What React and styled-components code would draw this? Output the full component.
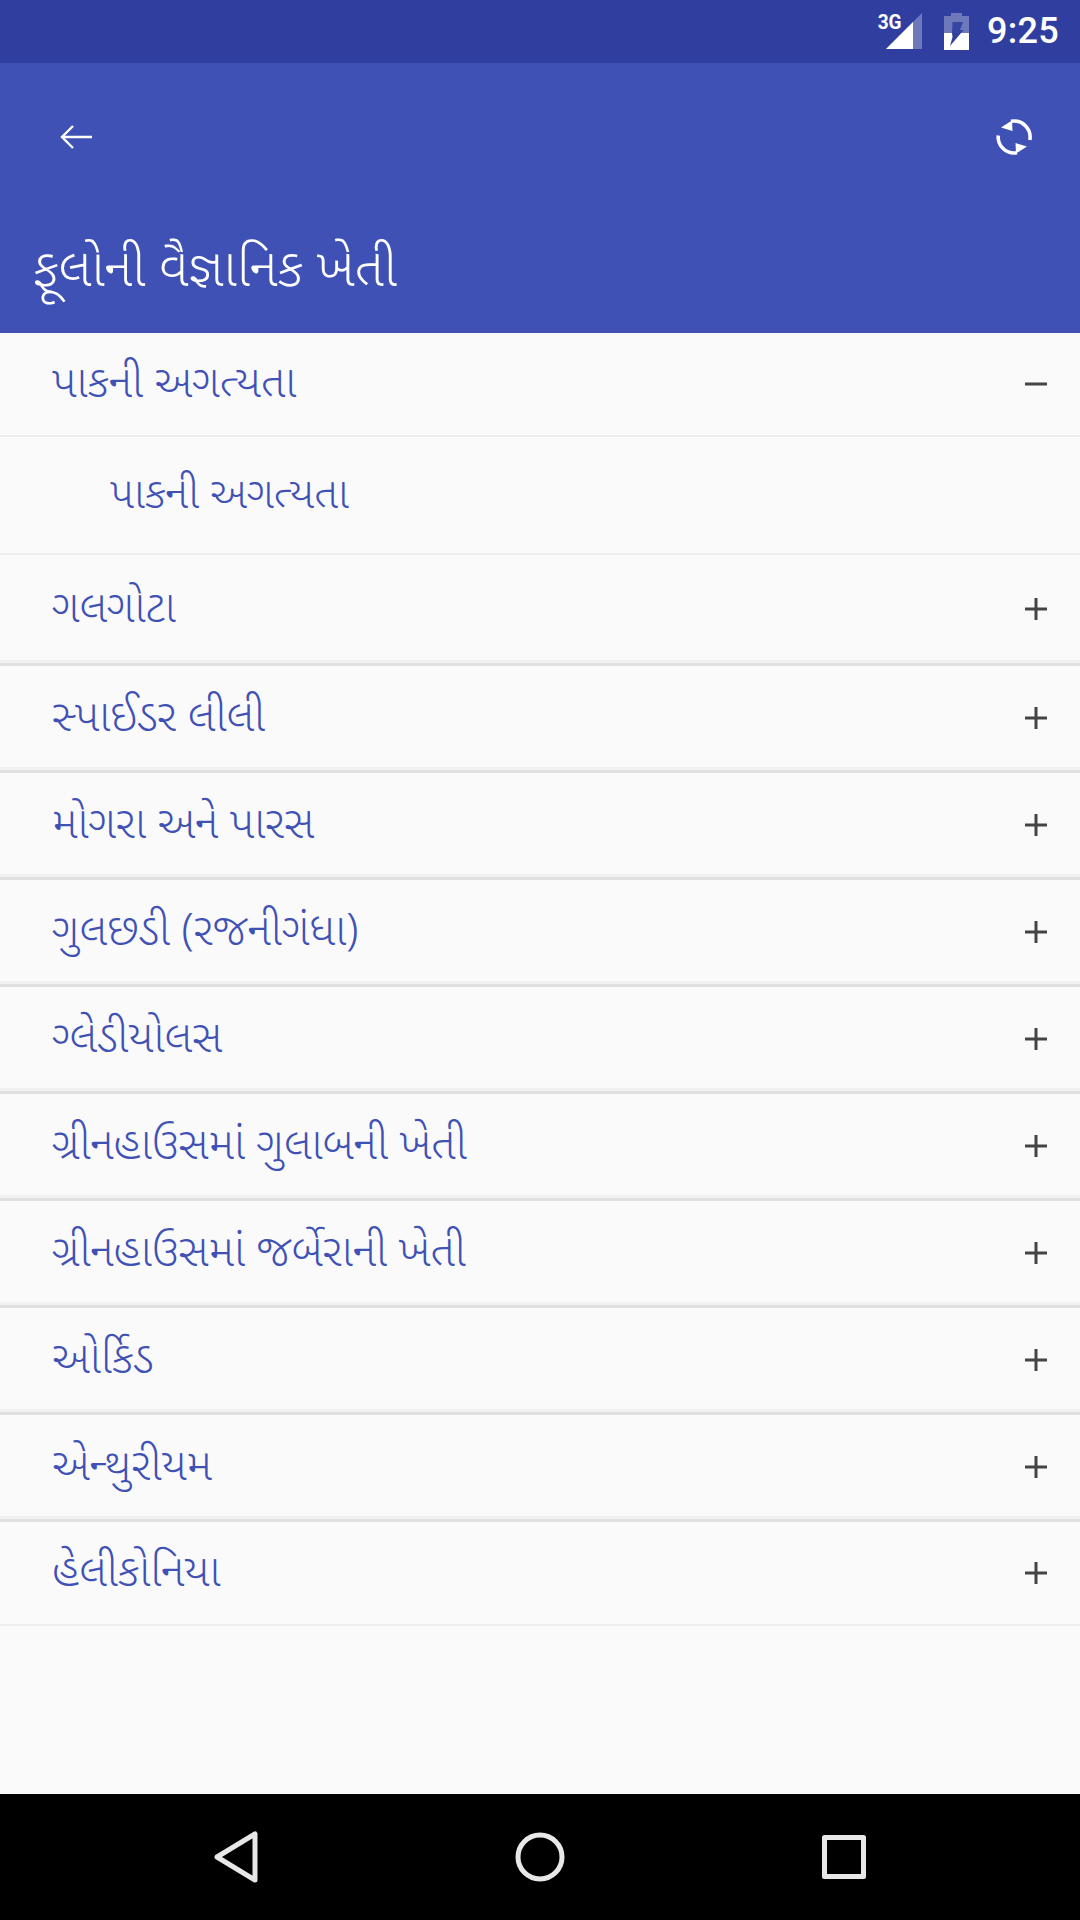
import React from "react";
import styled, { createGlobalStyle } from "styled-components";

const GlobalStyle = createGlobalStyle`
  html, body {
    margin: 0;
    padding: 0;
    background: #fafafa;
  }
  body {
    font-family: "Noto Sans Gujarati", "Noto Sans", Roboto, sans-serif;
  }
`;

const Screen = styled.div`
  width: 1080px;
  height: 1920px;
  display: flex;
  flex-direction: column;
  overflow: hidden;
  background: #fafafa;
`;

const StatusBar = styled.div`
  height: 63px;
  flex: none;
  background: #303f9f;
  display: flex;
  align-items: center;
  justify-content: flex-end;
  padding-right: 21px;
  color: #fff;
`;

const NetworkIcon = styled.div`
  position: relative;
  width: 36px;
  height: 36px;
  margin-top: -1px;
  margin-right: 22px;
`;

const NetworkLabel = styled.span`
  position: absolute;
  left: -9px;
  top: 0;
  font: bold 20px/18px Roboto, sans-serif;
  transform: scaleX(0.95);
`;

const Clock = styled.div`
  font: 500 36px/63px Roboto, sans-serif;
  margin-left: 18px;
  letter-spacing: 0.3px;
`;

const AppBar = styled.header`
  height: 270px;
  flex: none;
  background: #3f51b5;
  display: flex;
  flex-direction: column;
`;

const ActionRow = styled.div`
  height: 147px;
  display: flex;
  align-items: center;
  justify-content: space-between;
  padding: 0 46px 0 60px;
`;

const Title = styled.h1`
  margin: 33px 0 0;
  padding-left: 33px;
  font-size: 52.5px;
  line-height: 60px;
  font-weight: 300;
  color: #fff;
`;

const List = styled.div`
  flex: 1;
  display: flex;
  flex-direction: column;
`;

const Row = styled.div`
  box-sizing: border-box;
  height: ${(p) => p.$height}px;
  display: flex;
  align-items: center;
  justify-content: space-between;
  padding: 0 32px 0 ${(p) => (p.$child ? 110 : 52)}px;
  border-bottom: ${(p) => (p.$heavy ? "3px solid #e0e0e0" : "2px solid #eeeeee")};
  box-shadow: ${(p) => (p.$heavy ? "inset 0 -3px 0 #f1f1f1" : "none")};
`;

const RowLabel = styled.span`
  font-size: ${(p) => (p.$child ? 43 : 44)}px;
  font-weight: 350;
  line-height: 54px;
  padding-top: 5px;
  color: #3f51b5;
`;

const ExpanderIcon = styled.svg`
  margin-bottom: ${(p) => (p.$open ? 0 : 1)}px;
`;

const NavBar = styled.nav`
  height: 126px;
  flex: none;
  background: #000;
  display: flex;
  align-items: center;
  justify-content: center;
  gap: 257px;
`;

const BackArrow = () => (
  <svg width="32" height="24" viewBox="0 0 32 24" fill="none" stroke="#fff" strokeWidth="2.4">
    <path d="M32 12H2M13 1 2 12l11 11" />
  </svg>
);

const Refresh = () => (
  <svg width="40" height="40" viewBox="0 0 40 40" fill="none" stroke="#fff" strokeWidth="3.6">
    <path d="M17 4.3A16 16 0 0 1 35.8 23" />
    <path d="M23 35.7A16 16 0 0 1 4.2 18.5" />
    <path d="M7 10.5 18 3.5l.5 10.5z" fill="#fff" stroke="none" />
    <path d="M33 29.5 22 36.5l-.5-10.5z" fill="#fff" stroke="none" />
  </svg>
);

const Battery = () => (
  <svg width="25" height="37" viewBox="0 0 25 37">
    <path d="M7 0h11v3h7v34H0V3h7z" fill="#fff" opacity="0.3" />
    <path d="M0 20h25v17H0z" fill="#fff" />
    <path d="M8.5 9H19l-3 8h4l-3 3H8z" fill="#303f9f" opacity="0.9" />
    <path d="M8 20h9L6 33l2.5-9z" fill="#303f9f" />
  </svg>
);

const Signal = () => (
  <svg width="36" height="36" viewBox="0 0 36 36">
    <path d="M36 0v36H0z" fill="#fff" opacity="0.3" />
    <path d="M27 9v27H0z" fill="#fff" />
  </svg>
);

const Expander = ({ open }) => (
  <ExpanderIcon $open={open} width="24" height="24" viewBox="0 0 24 24" stroke="#444" strokeWidth="3">
    <path d={open ? "M1 12h22" : "M1 12h22M12 1v22"} />
  </ExpanderIcon>
);

const NavBack = () => (
  <svg width="44" height="52" viewBox="0 0 44 52" fill="none" stroke="#e8e8e8" strokeWidth="5" strokeLinejoin="round">
    <path d="M41 3v46L3 26z" />
  </svg>
);

const NavHome = () => (
  <svg width="50" height="50" viewBox="0 0 50 50" fill="none" stroke="#e8e8e8" strokeWidth="5">
    <circle cx="25" cy="25" r="22" />
  </svg>
);

const NavRecent = () => (
  <svg width="44" height="44" viewBox="0 0 44 44" fill="none" stroke="#e8e8e8" strokeWidth="5" strokeLinejoin="round">
    <rect x="2.5" y="2.5" width="39" height="39" />
  </svg>
);

const rows = [
  { label: "પાકની અગત્યતા", height: 104, open: true },
  { label: "પાકની અગત્યતા", height: 118, child: true },
  { label: "ગલગોટા", height: 111, heavy: true },
  { label: "સ્પાઈડર લીલી", height: 107, heavy: true },
  { label: "મોગરા અને પારસ", height: 107, heavy: true },
  { label: "ગુલછડી (રજનીગંધા)", height: 107, heavy: true },
  { label: "ગ્લેડીયોલસ", height: 107, heavy: true },
  { label: "ગ્રીનહાઉસમાં ગુલાબની ખેતી", height: 107, heavy: true },
  { label: "ગ્રીનહાઉસમાં જર્બેરાની ખેતી", height: 107, heavy: true },
  { label: "ઓર્કિડ", height: 107, heavy: true },
  { label: "એન્થુરીયમ", height: 107, heavy: true },
  { label: "હેલીકોનિયા", height: 104 },
];

export default function App() {
  return (
    <Screen>
      <GlobalStyle />
      <StatusBar>
        <NetworkIcon>
          <NetworkLabel>3G</NetworkLabel>
          <Signal />
        </NetworkIcon>
        <Battery />
        <Clock>9:25</Clock>
      </StatusBar>
      <AppBar>
        <ActionRow>
          <BackArrow />
          <Refresh />
        </ActionRow>
        <Title>ફૂલોની વૈજ્ઞાનિક ખેતી</Title>
      </AppBar>
      <List>
        {rows.map((row, i) => (
          <Row key={i} $height={row.height} $child={row.child} $heavy={row.heavy}>
            <RowLabel $child={row.child}>{row.label}</RowLabel>
            {!row.child && <Expander open={row.open} />}
          </Row>
        ))}
      </List>
      <NavBar>
        <NavBack />
        <NavHome />
        <NavRecent />
      </NavBar>
    </Screen>
  );
}
